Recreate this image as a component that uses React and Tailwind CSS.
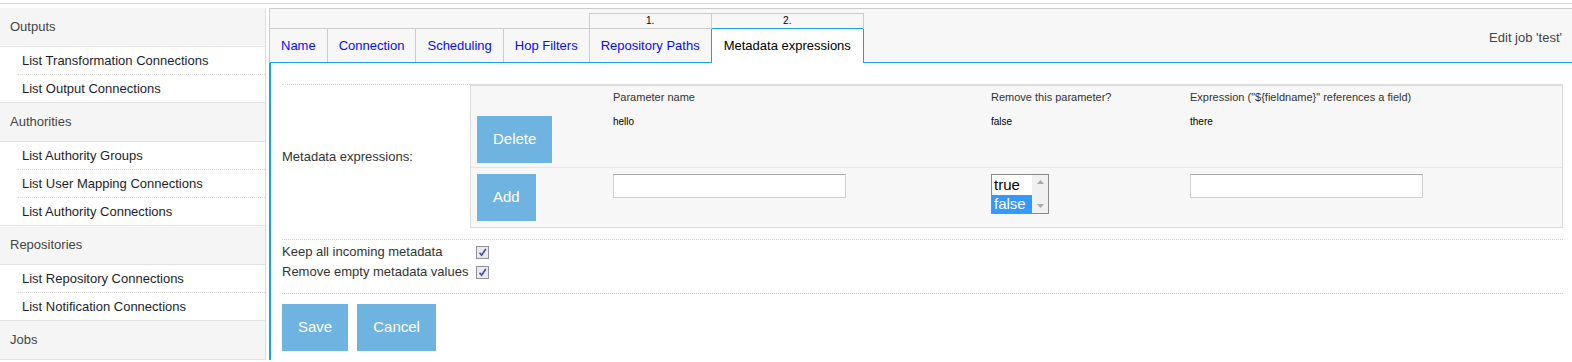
import React from 'react';

const groups = [
  { title: 'Outputs', items: ['List Transformation Connections', 'List Output Connections'] },
  { title: 'Authorities', items: ['List Authority Groups', 'List User Mapping Connections', 'List Authority Connections'] },
  { title: 'Repositories', items: ['List Repository Connections', 'List Notification Connections'] },
  { title: 'Jobs', items: [] },
];

const tabs = ['Name', 'Connection', 'Scheduling', 'Hop Filters', 'Repository Paths'];

function Sidebar() {
  return (
    <aside className="w-[266px] shrink-0 border-r border-[#dcdcdc]">
      {groups.map((g) => (
        <div key={g.title}>
          <div className="h-[39px] bg-[#f5f5f5] border-b border-[#e3e3e3] px-[10px] flex items-center text-[#444]">
            {g.title}
          </div>
          {g.items.map((item, i) => (
            <div
              key={item}
              className={
                i === g.items.length - 1
                  ? 'h-[28px] border-b border-[#e3e3e3] pl-[22px] flex items-center text-[#1d1d2b]'
                  : 'h-[28px] pl-[17px] flex'
              }
            >
              {i === g.items.length - 1 ? (
                item
              ) : (
                <div className="flex-1 border-b border-dotted border-[#d6d6d6] pl-[5px] flex items-center text-[#1d1d2b]">
                  {item}
                </div>
              )}
            </div>
          ))}
        </div>
      ))}
    </aside>
  );
}

function Btn({ children, className = '' }) {
  return (
    <button className={'h-[47px] px-[16px] bg-[#6fb3e0] text-white text-[15px] ' + className}>{children}</button>
  );
}

function Checkbox() {
  return (
    <span className="w-[13px] h-[13px] border border-[#8f8f9d] bg-[#eaeaea] flex items-center justify-center">
      <svg width="9" height="9" viewBox="0 0 9 9">
        <path d="M1.5 4.8 L3.6 7.2 L7.8 1" fill="none" stroke="#3b4f9c" strokeWidth="1.6" />
      </svg>
    </span>
  );
}

function ListBox() {
  return (
    <div className="mt-[6px] w-[58px] h-[40px] border border-[#8a8a8a] bg-white flex">
      <div className="flex-1 flex flex-col text-[15px] leading-[18px] text-black">
        <div className="h-[20px] pl-[2px] pt-[1px]">true</div>
        <div className="h-[18px] pl-[2px] bg-[#3399ff] text-white">false</div>
      </div>
      <div className="w-[16px] bg-[#f0f0f0] flex flex-col justify-between items-center py-[5px]">
        <svg width="7" height="4" viewBox="0 0 7 4"><path d="M0 4 L3.5 0 L7 4 Z" fill="#a8a8a8" /></svg>
        <svg width="7" height="4" viewBox="0 0 7 4"><path d="M0 0 L3.5 4 L7 0 Z" fill="#a8a8a8" /></svg>
      </div>
    </div>
  );
}

function TextInput() {
  return <input className="mt-[6px] w-[233px] h-[24px] border border-[#d0d0d0] border-t-[#aaaaaa] bg-white" />;
}

export default function App() {
  return (
    <div className="w-[1572px] h-[362px] overflow-hidden bg-white font-['Liberation_Sans',Arial,sans-serif] text-[13px] text-[#333]">
      <div className="h-[3px]" />
      <div className="border-t border-[#dcdcdc]" />
      <div className="mt-[4px] flex">
        <Sidebar />

        <main className="flex-1 ml-[3px] flex flex-col">
          {/* tab strip */}
          <div className="border-t border-l border-[#cccccc] bg-[#f7f7f7] pt-[4px]">
            <table className="w-full border-collapse">
              <tbody>
                <tr>
                  <td colSpan={4} className="p-0"></td>
                  <td className="h-[15px] p-0 border-t border-l border-[#cccccc] text-[10px] leading-none text-center text-black">1.</td>
                  <td className="h-[15px] p-0 border-t border-l border-r border-[#cccccc] text-[10px] leading-none text-center text-black">2.</td>
                  <td rowSpan={2} className="w-full p-0 pr-[10px] text-right align-middle text-[#444] border-b border-[#1ba1e2]">
                    Edit job 'test'
                  </td>
                </tr>
                <tr>
                  {tabs.map((t, i) => (
                    <td
                      key={t}
                      className={
                        (i === 0 ? '' : 'border-l ') +
                        'h-[34px] p-0 px-[11px] whitespace-nowrap border-t border-[#cccccc] border-b border-b-[#1ba1e2] text-[#0a0aff] align-middle'
                      }
                    >
                      {t}
                    </td>
                  ))}
                  <td className="h-[34px] p-0 px-[12px] whitespace-nowrap bg-white border-t border-l border-r border-[#1ba1e2] text-black align-middle">
                    Metadata expressions
                  </td>
                </tr>
              </tbody>
            </table>
          </div>

          {/* content */}
          <div className="flex-1 border-l-2 border-[#1ba1e2] bg-white pl-[11px] pr-[9px] pt-[21px]">
            <div className="flex">
              <div className="w-[188px] shrink-0 border-t border-dotted border-[#cfcfcf] flex items-center">
                Metadata expressions:
              </div>
              <div className="flex-1 border border-t-2 border-[#dddddd] bg-[#f7f7f7]">
                <div className="flex h-[22px] items-center text-[11px] text-[#333]">
                  <div className="w-[142px]" />
                  <div className="w-[378px]">Parameter name</div>
                  <div className="w-[199px]">Remove this parameter?</div>
                  <div>Expression ("${'{'}fieldname{'}'}" references a field)</div>
                </div>
                <div className="flex h-[60px] border-b border-[#e6e6e6] text-[10px] text-black">
                  <div className="w-[142px] pl-[6px]">
                    <Btn className="mt-[8px]">Delete</Btn>
                  </div>
                  <div className="w-[378px] pt-[6px]">hello</div>
                  <div className="w-[199px] pt-[6px]">false</div>
                  <div className="pt-[6px]">there</div>
                </div>
                <div className="flex h-[59px]">
                  <div className="w-[142px] pl-[6px]">
                    <Btn className="mt-[6px]">Add</Btn>
                  </div>
                  <div className="w-[378px]"><TextInput /></div>
                  <div className="w-[199px]"><ListBox /></div>
                  <div><TextInput /></div>
                </div>
              </div>
            </div>

            <div className="mt-[11px] border-t border-b border-dotted border-[#cfcfcf] pt-[2px] pb-[11px]">
              <div className="h-[20px] flex items-center">
                <span className="w-[194px]">Keep all incoming metadata</span>
                <Checkbox />
              </div>
              <div className="h-[20px] flex items-center">
                <span className="w-[194px]">Remove empty metadata values</span>
                <Checkbox />
              </div>
            </div>

            <div className="mt-[10px] flex gap-[9px]">
              <Btn>Save</Btn>
              <Btn>Cancel</Btn>
            </div>
          </div>
        </main>
      </div>
    </div>
  );
}
